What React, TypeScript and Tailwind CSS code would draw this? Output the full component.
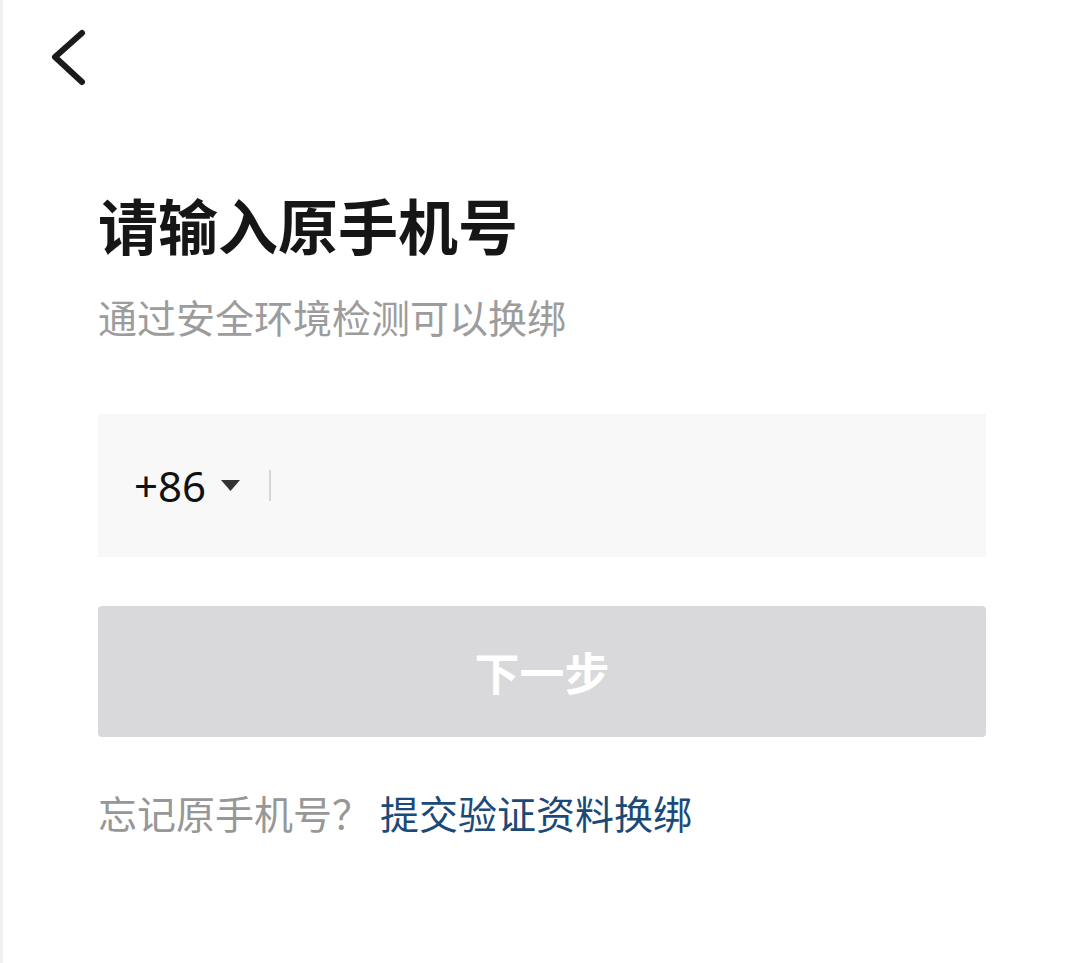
import React from "react";

export default function App() {
  return (
    <div
      className="w-[1080px] h-[963px] bg-white border-l-[3px] border-[#f0f0f0] overflow-hidden"
      style={{ fontFamily: '"Noto Sans CJK SC", "Noto Sans", sans-serif' }}
    >
      <div className="pl-[45px] pt-[28px]">
        <svg width="40" height="60" viewBox="0 0 40 60" fill="none">
          <path
            d="M34 5 L7 29 L34 54"
            stroke="#1a1a1a"
            strokeWidth="6"
            strokeLinecap="round"
            strokeLinejoin="round"
          />
        </svg>
      </div>
      <div className="pl-[95px] pr-[94px]">
        <div className="mt-[106px] text-[60px] leading-none font-bold text-[#161616]">
          请输入原手机号
        </div>
        <div className="mt-[43px] text-[39px] leading-none text-[#9c9c9c]">
          通过安全环境检测可以换绑
        </div>
        <div className="mt-[78px] h-[143px] bg-[#f8f8f8] flex items-center pl-[36px]">
          <span
            className="text-[42px] leading-none text-[#111]"
            style={{ fontFamily: '"Noto Sans", sans-serif' }}
          >
            +86
          </span>
          <svg className="ml-[15px]" width="19" height="11" viewBox="0 0 19 11">
            <path d="M0 0 L19 0 L9.5 11 Z" fill="#333" />
          </svg>
          <div className="ml-[29px] w-[2px] h-[31px] bg-[#d6d6d6]" />
        </div>
        <div className="mt-[49px] h-[131px] rounded-[4px] bg-[#d9d9db] flex items-center justify-center">
          <span className="text-[45px] leading-none font-bold text-white">下一步</span>
        </div>
        <div className="mt-[56px] text-[39px] leading-none flex">
          <span className="text-[#979797]">忘记原手机号？</span>
          <span className="ml-[9px] text-[#1b4a78]">提交验证资料换绑</span>
        </div>
      </div>
    </div>
  );
}
